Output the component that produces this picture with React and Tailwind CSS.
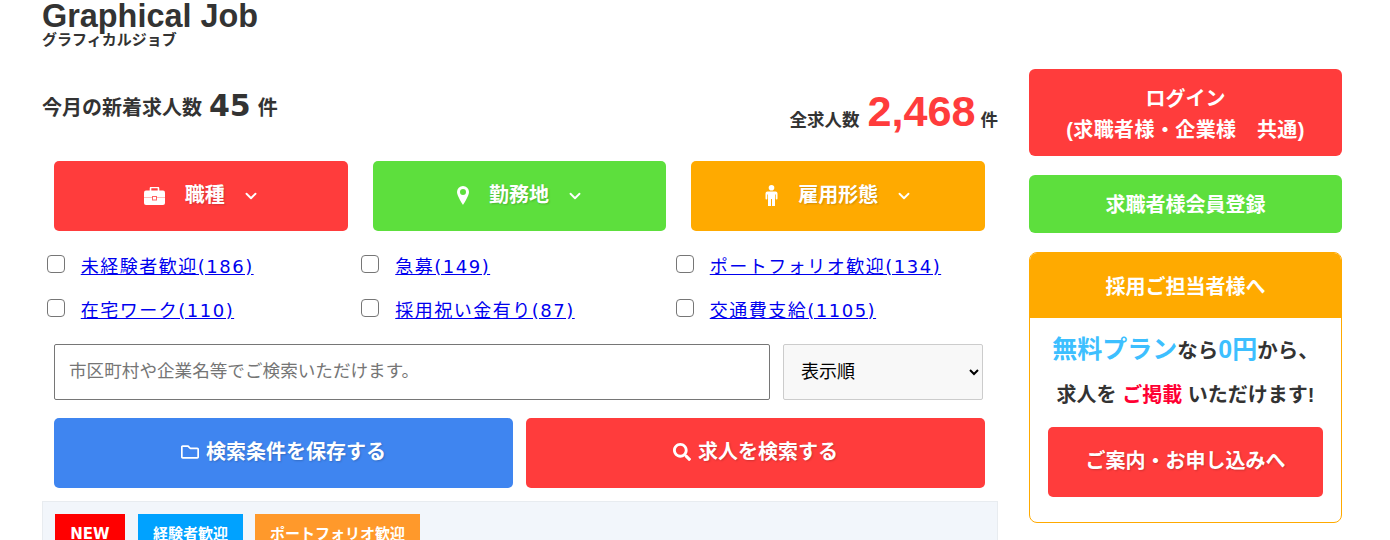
import { ChevronDown } from "lucide-react"
import { FaRegFolder, FaSearch } from "react-icons/fa"

const sans = "font-['Liberation_Sans','Noto_Sans_CJK_JP',sans-serif]"
const mixed = "font-['DejaVu_Sans','Noto_Sans_CJK_JP',sans-serif]"
const shadow = "[text-shadow:1px_1px_2px_rgba(0,0,0,0.18)]"

function BriefcaseIcon() {
  return (
    <svg width="21" height="18" viewBox="0 0 21 18">
      <path d="M6.5 4V1.5a1 1 0 0 1 1-1h6a1 1 0 0 1 1 1V4" fill="none" stroke="white" strokeWidth="1.6" />
      <rect x="0" y="3.5" width="21" height="14.5" rx="2" fill="white" />
      <path d="M0 10.5h21" stroke="#ff3c3c" strokeOpacity="0.35" strokeWidth="1" />
      <rect x="8.5" y="9.5" width="4" height="3.5" fill="white" stroke="#ff3c3c" strokeOpacity="0.8" strokeWidth="1" />
    </svg>
  )
}

function PinIcon() {
  return (
    <svg width="12" height="19" viewBox="0 0 12 19">
      <path
        fillRule="evenodd"
        fill="white"
        d="M6 0a6 6 0 0 0-6 6c0 4 6 13 6 13s6-9 6-13a6 6 0 0 0-6-6zm0 3a3 3 0 1 1 0 6 3 3 0 0 1 0-6z"
      />
    </svg>
  )
}

function PersonIcon() {
  return (
    <svg width="13" height="21" viewBox="0 0 13 21">
      <circle cx="6.5" cy="2.8" r="2.8" fill="white" />
      <path
        fill="white"
        d="M2.5 6.5h8a2 2 0 0 1 2 2v5a.9.9 0 0 1-1.8 0V9.5h-.7V21H7V14H6v7H3V9.5h-.7v4a.9.9 0 0 1-1.8 0v-5a2 2 0 0 1 2-2z"
      />
    </svg>
  )
}

const categories = [
  { label: "職種", icon: BriefcaseIcon, color: "bg-[#ff3c3c]" },
  { label: "勤務地", icon: PinIcon, color: "bg-[#5ddf3d]" },
  { label: "雇用形態", icon: PersonIcon, color: "bg-[#ffaa00]" },
]

const filters = [
  ["未経験者歓迎(186)", "急募(149)", "ポートフォリオ歓迎(134)"],
  ["在宅ワーク(110)", "採用祝い金有り(87)", "交通費支給(1105)"],
]

function CategoryButton({ label, icon: Icon, color }) {
  return (
    <button className={`${color} flex h-[70px] w-[293.67px] items-center justify-center rounded-[5px] pb-[1px] pl-[2px] text-[20px] font-bold text-white ${shadow}`}>
      <Icon />
      <span className="mb-[2px] ml-[20px]">{label}</span>
      <ChevronDown size={18} strokeWidth={2.5} className="ml-[17px]" />
    </button>
  )
}

function FilterRow({ items }) {
  return (
    <div className="flex h-[44px] items-center pl-[4.75px]">
      {items.map((item) => (
        <label key={item} className="flex w-[314.5px] items-center">
          <input
            type="checkbox"
            className="m-0 -mt-[2px] h-[18px] w-[18px] appearance-none rounded-[4px] border-[1.5px] border-[#767676] bg-white"
          />
          <a href="#" className={`${mixed} ml-[16px] pt-[3px] text-[18px] leading-[24px] tracking-[1.5px] text-[#0000ee] underline`}>
            {item}
          </a>
        </label>
      ))}
    </div>
  )
}

export default function App() {
  return (
    <div className={`${sans} h-[540px] w-[1390px] overflow-hidden bg-white text-[#333333]`}>
      <div className="ml-[42px] flex w-[1300px] justify-between">
        {/* メインカラム */}
        <div className="w-[956px]">
          <h1 className="h-[33px] text-[32.4px] leading-[33px] font-bold">Graphical Job</h1>
          <p className="h-[16px] text-[15px] leading-[14px] font-bold">グラフィカルジョブ</p>

          <div className="mt-[27px] flex h-[85px] items-start justify-between">
            <p className="mt-[11px] flex h-[42px] items-center text-[20px] font-bold">
              今月の新着求人数
              <span className={`${mixed} mx-[7px] mb-[6px] text-[30px]`}>45</span>
              件
            </p>
            <p className="mt-[13px] flex items-baseline text-[17.5px] font-bold">
              全求人数
              <span className="mr-[5px] ml-[8px] text-[43.2px] leading-[44px] text-[#ff3c3c]">2,468</span>
              件
            </p>
          </div>

          <div className="ml-[12px] flex w-[931px] justify-between">
            {categories.map((c) => (
              <CategoryButton key={c.label} {...c} />
            ))}
          </div>

          <div className="mt-[12px]">
            {filters.map((row, i) => (
              <FilterRow key={i} items={row} />
            ))}
          </div>

          <div className="mt-[13px] ml-[12px] flex gap-[13px]">
            <input
              placeholder="市区町村や企業名等でご検索いただけます。"
              className="h-[56px] w-[716px] rounded-[2px] border border-[#767676] px-[14px] pb-[2px] text-[17.6px] placeholder:text-[#757575]"
            />
            <select className="h-[56px] w-[200px] rounded-[2px] border border-[#cccccc] bg-[#f8f8f8] pl-[13px] text-[18px] text-black">
              <option>表示順</option>
            </select>
          </div>

          <div className="mt-[18px] ml-[12px] flex w-[931px] justify-between">
            <button className={`flex h-[70px] w-[459px] items-center justify-center rounded-[5px] bg-[#3f85f0] pb-[2px] text-[20px] font-bold text-white ${shadow}`}>
              <FaRegFolder className="mr-[7px] text-[18px]" />
              検索条件を保存する
            </button>
            <button className={`flex h-[70px] w-[459px] items-center justify-center rounded-[5px] bg-[#ff3c3c] pb-[2px] text-[20px] font-bold text-white ${shadow}`}>
              <FaSearch className="mr-[7px] text-[18px]" />
              求人を検索する
            </button>
          </div>

          <div className="mt-[13px] h-[120px] border border-[#e8ecf0] bg-[#f2f6fb] pt-[12px] pl-[12px]">
            <div className="flex text-[15px] font-bold text-white">
              <span className={`${mixed} flex h-[40px] w-[70px] items-center justify-center bg-[#ff0000]`}>NEW</span>
              <span className="ml-[13px] flex h-[40px] w-[105px] items-center justify-center bg-[#00a2ff]">経験者歓迎</span>
              <span className="ml-[12px] flex h-[40px] w-[165px] items-center justify-center bg-[#ff992b]">ポートフォリオ歓迎</span>
            </div>
          </div>
        </div>

        {/* サイドバー */}
        <aside className="mt-[69px] w-[313px] font-bold text-white">
          <a className="flex h-[87px] flex-col items-center justify-center rounded-[6px] bg-[#ff3c3c] pt-[4px] text-[20px] leading-[31px]">
            <span>ログイン</span>
            <span className="tracking-[0.4px]">(求職者様・企業様　共通)</span>
          </a>
          <a className="mt-[19px] flex h-[58px] items-center justify-center rounded-[6px] bg-[#5ddf3d] pt-[2px] text-[20px]">
            求職者様会員登録
          </a>
          <div className="mt-[19px] h-[271px] rounded-[8px] border border-[#ffaa00]">
            <div className="flex h-[65px] items-center justify-center rounded-t-[7px] bg-[#ffaa00] pt-[2px] text-[20px]">
              採用ご担当者様へ
            </div>
            <p className="mt-[13px] text-center text-[20.5px] leading-[36px] text-[#333333]">
              <span className="text-[25px] text-[#3dbfff]">無料プラン</span>なら
              <span className="text-[25px] text-[#3dbfff]">0円</span>から、
            </p>
            <p className="mt-[8px] text-center text-[20px] leading-[36px] text-[#333333]">
              求人を <span className="text-[#ff0033]">ご掲載</span> いただけます!
            </p>
            <a className={`mx-auto mt-[14px] flex h-[70px] w-[275px] items-center justify-center rounded-[5px] bg-[#ff3c3c] pb-[2px] text-[20px] ${shadow}`}>
              ご案内・お申し込みへ
            </a>
          </div>
        </aside>
      </div>
    </div>
  )
}
